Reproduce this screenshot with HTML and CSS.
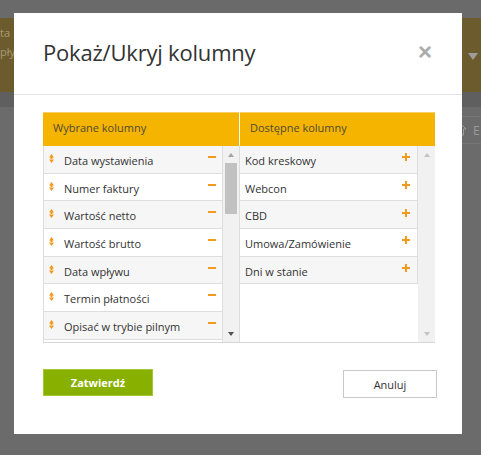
FILE: index.html
```html
<!DOCTYPE html>
<html lang="pl">
<head>
<meta charset="utf-8">
<title>Pokaż/Ukryj kolumny</title>
<link rel="stylesheet" href="styles.css">
</head>
<body>
<div class="page">
  <div class="topbar"></div>
  <div class="band">
    <div class="band-text">
      <span class="band-line">ta</span>
      <span class="band-line">pływ</span>
    </div>
    <span class="band-caret"></span>
  </div>
  <div class="strip"></div>
  <div class="toolbar">
    <span class="tool-btn">
      <svg class="tool-icon" width="10" height="12" viewBox="0 0 10 12"><path d="M5 1 L9 5 H6.5 V11 H3.5 V5 H1 Z" fill="none" stroke="#9a9a9a" stroke-width="1"/></svg>
      <span class="tool-label">E</span>
    </span>
  </div>
</div>

<div class="modal">
  <div class="modal-header">
    <h2 class="modal-title">Pokaż/Ukryj kolumny</h2>
    <span class="modal-close">×</span>
  </div>
  <div class="modal-body">
    <div class="columns">
      <div class="col col-selected">
        <div class="col-head">Wybrane kolumny</div>
        <div class="col-list">
          <ul class="items">
            <li class="item"><svg class="drag" width="5" height="9" viewBox="0 0 5 9"><path d="M0 3.5 L2.5 0 L5 3.5 Z M0 5.5 L2.5 9 L5 5.5 Z M1.5 3 H3.5 V6 H1.5 Z" fill="#f39a1e"/></svg><span class="item-text">Data wystawienia</span><span class="minus"></span></li>
            <li class="item"><svg class="drag" width="5" height="9" viewBox="0 0 5 9"><path d="M0 3.5 L2.5 0 L5 3.5 Z M0 5.5 L2.5 9 L5 5.5 Z M1.5 3 H3.5 V6 H1.5 Z" fill="#f39a1e"/></svg><span class="item-text">Numer faktury</span><span class="minus"></span></li>
            <li class="item"><svg class="drag" width="5" height="9" viewBox="0 0 5 9"><path d="M0 3.5 L2.5 0 L5 3.5 Z M0 5.5 L2.5 9 L5 5.5 Z M1.5 3 H3.5 V6 H1.5 Z" fill="#f39a1e"/></svg><span class="item-text">Wartość netto</span><span class="minus"></span></li>
            <li class="item"><svg class="drag" width="5" height="9" viewBox="0 0 5 9"><path d="M0 3.5 L2.5 0 L5 3.5 Z M0 5.5 L2.5 9 L5 5.5 Z M1.5 3 H3.5 V6 H1.5 Z" fill="#f39a1e"/></svg><span class="item-text">Wartość brutto</span><span class="minus"></span></li>
            <li class="item"><svg class="drag" width="5" height="9" viewBox="0 0 5 9"><path d="M0 3.5 L2.5 0 L5 3.5 Z M0 5.5 L2.5 9 L5 5.5 Z M1.5 3 H3.5 V6 H1.5 Z" fill="#f39a1e"/></svg><span class="item-text">Data wpływu</span><span class="minus"></span></li>
            <li class="item"><svg class="drag" width="5" height="9" viewBox="0 0 5 9"><path d="M0 3.5 L2.5 0 L5 3.5 Z M0 5.5 L2.5 9 L5 5.5 Z M1.5 3 H3.5 V6 H1.5 Z" fill="#f39a1e"/></svg><span class="item-text">Termin płatności</span><span class="minus"></span></li>
            <li class="item"><svg class="drag" width="5" height="9" viewBox="0 0 5 9"><path d="M0 3.5 L2.5 0 L5 3.5 Z M0 5.5 L2.5 9 L5 5.5 Z M1.5 3 H3.5 V6 H1.5 Z" fill="#f39a1e"/></svg><span class="item-text">Opisać w trybie pilnym</span><span class="minus"></span></li>
            <li class="item item-empty"></li>
          </ul>
          <div class="scrollbar">
            <span class="sb-arrow sb-up"></span>
            <span class="sb-thumb"></span>
            <span class="sb-space"></span>
            <span class="sb-arrow sb-down sb-active"></span>
          </div>
        </div>
      </div>
      <div class="col col-available">
        <div class="col-head">Dostępne kolumny</div>
        <div class="col-list">
          <ul class="items">
            <li class="item"><span class="item-text">Kod kreskowy</span><span class="plus"></span></li>
            <li class="item"><span class="item-text">Webcon</span><span class="plus"></span></li>
            <li class="item"><span class="item-text">CBD</span><span class="plus"></span></li>
            <li class="item"><span class="item-text">Umowa/Zamówienie</span><span class="plus"></span></li>
            <li class="item"><span class="item-text">Dni w stanie</span><span class="plus"></span></li>
          </ul>
          <div class="scrollbar scrollbar-wide">
            <span class="sb-arrow sb-up sb-disabled"></span>
            <span class="sb-space"></span>
            <span class="sb-arrow sb-down sb-disabled"></span>
          </div>
        </div>
      </div>
    </div>
    <div class="actions">
      <button class="btn btn-ok">Zatwierdź</button>
      <button class="btn btn-cancel">Anuluj</button>
    </div>
  </div>
</div>
</body>
</html>
```

FILE: styles.css
```css
* { box-sizing: border-box; }

body {
  margin: 0;
  width: 481px;
  height: 455px;
  overflow: hidden;
  position: relative;
  background: #6b6b6b;
  font-family: "Open Sans", "Noto Sans", sans-serif;
}

/* dimmed page behind the dialog */
.page { width: 481px; }
.topbar { height: 18px; background: #6a6a6a; }
.band {
  height: 74px;
  background: #6c5b2d;
  display: flex;
  justify-content: space-between;
  align-items: center;
}
.band-text {
  align-self: flex-start;
  display: flex;
  flex-direction: column;
  padding-top: 5px;
  font-size: 11px;
  line-height: 19px;
  color: #a99b73;
  white-space: nowrap;
}
.band-caret {
  width: 0;
  height: 0;
  margin-right: 3px;
  margin-top: 2px;
  border-left: 5px solid transparent;
  border-right: 5px solid transparent;
  border-top: 7px solid #9d9d9d;
}
.strip { height: 15px; background: #5f5f5f; }
.toolbar {
  display: flex;
  justify-content: flex-end;
  padding-top: 9px;
}
.tool-btn {
  display: flex;
  align-items: center;
  gap: 6px;
  width: 24px;
  height: 28px;
  border-top: 1px solid #777;
  border-bottom: 1px solid #777;
  font-size: 12px;
  color: #9a9a9a;
}

/* dialog */
.modal {
  position: absolute;
  left: 14px;
  top: 13px;
  width: 448px;
  height: 421px;
  background: #fff;
}
.modal-header {
  height: 82px;
  border-bottom: 1px solid #e3e3e3;
  padding: 0 30px 4px 29px;
  display: flex;
  justify-content: space-between;
  align-items: center;
}
.modal-title {
  margin: 0;
  font-size: 22px;
  letter-spacing: -0.2px;
  font-weight: 400;
  color: #333;
}
.modal-close {
  font-family: "Liberation Sans", Arial, sans-serif;
  font-size: 24px;
  font-weight: 700;
  line-height: 1;
  color: #ababab;
}

.modal-body { padding: 17px 27px 0 29px; }

.columns {
  display: grid;
  grid-template-columns: 196px 196px;
}
.col-head {
  height: 34px;
  background: #f4b400;
  border-top: 1px solid #f6cf6a;
  padding: 0 10px 4px 10px;
  display: flex;
  align-items: center;
  font-size: 11px;
  color: #524a36;
}
.col-available .col-head { border-left: 1px solid #fff; }

.col-list {
  height: 197px;
  display: flex;
  border-bottom: 1px solid #d6d6d6;
  border-left: 1px solid #dcdcdc;
  overflow: hidden;
}

.items {
  list-style: none;
  margin: 0;
  padding: 0;
  flex: 1;
  background: #fff;
}
.item {
  height: 27.7px;
  display: flex;
  align-items: center;
  border-bottom: 1px solid #dedede;
  border-right: 1px solid #dedede;
  padding: 0 6px 0 5px;
  font-size: 11px;
  color: #333;
  background: #f6f6f6;
}
.item:nth-child(even) { background: #fff; }
.drag { flex: none; margin-right: 10px; margin-top: -2px; }
.item-text { flex: 1; padding-top: 2px; white-space: nowrap; }
.minus {
  flex: none;
  width: 8px;
  height: 2px;
  background: #f39a1e;
  margin-bottom: 5px;
}
.plus {
  flex: none;
  width: 8px;
  height: 8px;
  margin-bottom: 4px;
  margin-right: 1px;
  background:
    linear-gradient(#f39a1e, #f39a1e) center / 8px 2px no-repeat,
    linear-gradient(#f39a1e, #f39a1e) center / 2px 8px no-repeat;
}

.scrollbar {
  flex: none;
  width: 16px;
  background: #f1f1f1;
  display: flex;
  flex-direction: column;
  align-items: center;
}
.scrollbar-wide { width: 17px; }
.sb-arrow {
  flex: none;
  height: 17px;
  width: 100%;
  display: flex;
  align-items: center;
  justify-content: center;
}
.sb-arrow::before {
  content: "";
  width: 0;
  height: 0;
  border-left: 3.5px solid transparent;
  border-right: 3.5px solid transparent;
}
.sb-up::before { border-bottom: 4px solid #a3a3a3; }
.sb-down::before { border-top: 4px solid #a3a3a3; }
.sb-active.sb-down::before { border-top-color: #505050; }
.sb-disabled.sb-up::before { border-bottom-color: #c3c3c3; }
.sb-disabled.sb-down::before { border-top-color: #c3c3c3; }
.sb-thumb {
  flex: none;
  width: 12px;
  height: 51px;
  background: #c1c1c1;
}
.sb-space { flex: 1; }

.actions {
  margin-top: 26px;
  display: flex;
  justify-content: space-between;
  align-items: flex-start;
}
.btn {
  font-family: "Open Sans", "Noto Sans", sans-serif;
  font-size: 11px;
  cursor: pointer;
  padding: 0;
}
.btn-ok {
  width: 110px;
  height: 27px;
  background: #88b000;
  border: 1px solid #a4c832;
  color: #fff;
  font-weight: 700;
}
.btn-cancel {
  width: 94px;
  height: 28px;
  margin-top: 1px;
  margin-right: -2px;
  background: #fff;
  border: 1px solid #c8c8c8;
  color: #333;
}
```
